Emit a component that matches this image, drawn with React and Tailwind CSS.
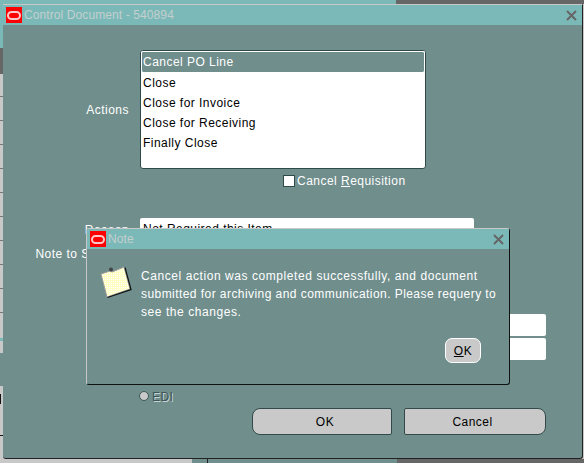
import React from "react";

const font = "font-['Liberation_Sans',Arial,sans-serif] text-[12px] leading-[14px] tracking-[0.47px]";

function OracleLogo() {
  return (
    <div className="flex h-[16px] w-[16px] items-center justify-center bg-[#ff0000]">
      <div className="h-[9px] w-[14px] rounded-[5px] border-2 border-[#ffc8c8]"></div>
    </div>
  );
}

function CloseIcon() {
  return (
    <svg width="11" height="11" viewBox="0 0 11 11" className="text-[#666666]">
      <path d="M1 1 L10 10 M10 1 L1 10" stroke="currentColor" strokeWidth="2" fill="none" />
    </svg>
  );
}

function NoteIcon() {
  return (
    <svg width="34" height="34" viewBox="0 0 34 34" className="ml-[12px] mt-[16px]">
      <defs>
        <pattern id="dither" width="2" height="2" patternUnits="userSpaceOnUse">
          <rect width="2" height="2" fill="#ffffc4" />
          <rect width="1" height="1" fill="#ffffff" />
        </pattern>
      </defs>
      <polygon points="2,9 11,6 13,7 25,2 31,24 8,32" fill="url(#dither)" stroke="#9a9a9a" strokeWidth="1" />
      <path d="M8.5 32.5 L32 24.5 L26 2.5" stroke="#111111" strokeWidth="1.2" fill="none" />
      <circle cx="12" cy="4.5" r="2" fill="#444444" />
    </svg>
  );
}

function TitleBar({ title, height }) {
  return (
    <div className={`flex items-center justify-between bg-[#7ab9b8] pl-[3px] pr-[5px] ${height}`}>
      <div className="flex items-center gap-[2px]">
        <OracleLogo />
        <span className="tracking-[0.1px] text-[#c4cfce]">{title}</span>
      </div>
      <CloseIcon />
    </div>
  );
}

function Button({ children, className }) {
  return (
    <div className={`flex h-[27px] items-center justify-center border border-[#324a4a] bg-[#c9c9c9] text-black ${className}`}>
      {children}
    </div>
  );
}

export default function App() {
  return (
    <div className={`relative h-[463px] w-[584px] overflow-hidden bg-[#c8c8c8] ${font}`}>
      {/* background window pieces */}
      <div className="absolute left-0 top-0 h-[4px] w-[396px] bg-[#7ab9b8]"></div>
      <div className="absolute left-[396px] top-0 h-[4px] w-[188px] bg-[#666666]"></div>
      <div className="absolute left-0 top-[4px] h-[44px] w-[3px] bg-[#7ab9b8]"></div>
      <div className="absolute left-0 top-[48px] h-[26px] w-[3px] bg-[#666666]"></div>
      {[96, 120, 144, 168, 192, 216, 240, 264, 288, 312].map((y) => (
        <div key={y} className="absolute left-0 h-[1px] w-[3px] bg-[#777777]" style={{ top: y }}></div>
      ))}
      <div className="absolute left-0 top-[338px] h-[3px] w-[3px] bg-[#7ab9b8]"></div>
      <div className="absolute left-0 top-[353px] h-[33px] w-[3px] bg-[#708e8c]"></div>
      <div className="absolute left-0 top-[394px] h-[10px] w-[1px] bg-[#111111]"></div>
      <div className="absolute left-0 top-[435px] h-[1px] w-[3px] bg-[#111111]"></div>
      <div className="absolute bottom-0 left-[192px] h-[4px] w-[205px] bg-[#708e8c]"></div>
      <div className="absolute bottom-0 left-[207px] h-[4px] w-[1px] bg-[#222222]"></div>
      <div className="absolute bottom-0 left-[397px] h-[4px] w-[187px] bg-[#666666]"></div>

      {/* main window */}
      <div className="absolute left-[3px] top-[4px] flex h-[455px] w-[580px] flex-col rounded-b-[3px] border-t border-r border-b border-t-[#c8c8c8] border-r-[#222222] border-b-[#222222] bg-[#708e8c] text-white">
        <TitleBar title="Control Document - 540894" height="h-[20px]" />
        <div className="flex flex-1 flex-col pt-[25px]">
          <div className="flex">
            <div className="flex w-[126px] items-center justify-end pt-[1px]">Actions</div>
            <div className="ml-[11px] flex h-[119px] w-[286px] flex-col rounded-[3px] border border-[#2f4a4a] bg-white text-black">
              <div className="h-[21px] rounded-[2px] border-t border-l border-r border-white bg-[#708e8c] px-[1px] pt-[3px] text-white">Cancel PO Line</div>
              <div className="flex flex-col gap-[6px] px-[2px] pt-[4px]">
                <span>Close</span>
                <span>Close for Invoice</span>
                <span>Close for Receiving</span>
                <span>Finally Close</span>
              </div>
            </div>
          </div>

          <div className="ml-[280px] mt-[5px] flex items-center gap-[2px]">
            <div className="h-[12px] w-[12px] border border-[#2f4a4a] bg-white"></div>
            <span>Cancel <span className="underline">R</span>equisition</span>
          </div>

          <div className="mt-[30px] flex">
            <div className="w-[126px] pt-[5px] text-right">Reason</div>
            <div className="ml-[11px] h-[22px] w-[334px] rounded-[2px] bg-white px-[3px] pt-[4px] text-black">Not Required this Item</div>
          </div>
          <div className="mt-[2px] flex">
            <div className="w-[126px] pt-[5px] text-right">Note to Supplier</div>
            <div className="ml-[11px] h-[22px] w-[334px] rounded-[2px] bg-white"></div>
          </div>

          <div className="ml-[300px] mt-[50px] flex w-[243px] flex-col gap-[2px]">
            <div className="h-[22px] rounded-[2px] bg-white"></div>
            <div className="h-[22px] rounded-[2px] bg-white"></div>
          </div>

          <div className="ml-[136px] mt-[27px] flex items-center gap-[3px]">
            <div className="h-[10px] w-[10px] rounded-full border border-[#3d5555] bg-[#c9c9c9]"></div>
            <span className="pt-[3px] text-[#3d5555] [text-shadow:1px_1px_0_#c8d4d3]">EDI</span>
          </div>

          <div className="ml-[249px] mt-[4px] flex gap-[12px]">
            <Button className="w-[140px] rounded-l-[8px] rounded-r-[2px] pl-[6px]">OK</Button>
            <Button className="w-[142px] rounded-l-[2px] rounded-r-[8px] pr-[5px]">Cancel</Button>
          </div>
        </div>
      </div>

      {/* note dialog */}
      <div className="absolute left-[86px] top-[228px] flex h-[157px] w-[424px] flex-col rounded-[3px] border-t border-l border-r border-b border-t-[#c8c8c8] border-l-[#c8c8c8] border-r-[#111111] border-b-[#111111] bg-[#708e8c] text-white">
        <TitleBar title="Note" height="h-[20px]" />
        <div className="flex">
          <NoteIcon />
          <div className="ml-[8px] mt-[18px] flex w-[366px] flex-col leading-[18px] tracking-[0.57px]">
            <span>Cancel action was completed successfully, and document</span>
            <span className="tracking-[0.44px]">submitted for archiving and communication. Please requery to</span>
            <span>see the changes.</span>
          </div>
        </div>
        <div className="absolute left-[358px] top-[109px] flex h-[25px] w-[36px] items-center justify-center rounded-[7px] border border-white bg-[#c9c9c9] text-black">
          <span><span className="underline">O</span>K</span>
        </div>
      </div>
    </div>
  );
}
